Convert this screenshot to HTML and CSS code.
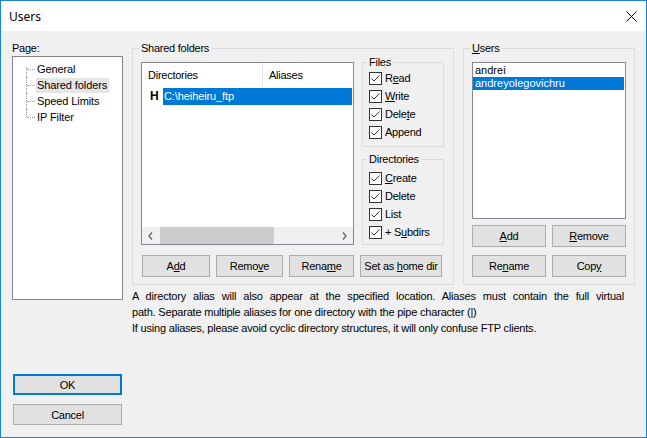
FILE: index.html
```html
<!DOCTYPE html>
<html>
<head>
<meta charset="utf-8">
<title>Users</title>
<link rel="stylesheet" href="styles.css">
</head>
<body>
<div class="window">
  <div class="titlebar">
    <span class="title">Users</span>
    <svg class="close" width="11" height="11" viewBox="0 0 11 11"><path d="M0.5 0.5L10.5 10.5M10.5 0.5L0.5 10.5" stroke="#000" stroke-width="1" fill="none"/></svg>
  </div>
  <div class="content">
    <div class="leftcol">
      <div class="label">Page:</div>
      <div class="tree">
        <ul>
          <li><span>General</span></li>
          <li><span class="sel">Shared folders</span></li>
          <li><span>Speed Limits</span></li>
          <li><span>IP Filter</span></li>
        </ul>
      </div>
      <div class="dlgbtns">
        <button class="btn default">OK</button>
        <button class="btn">Cancel</button>
      </div>
    </div>
    <div class="main">
      <div class="groups">
        <fieldset class="group shared">
          <legend>Shared folders</legend>
          <div class="sharedrow">
            <div class="listview">
              <div class="lv-head">
                <div class="lv-col1">Directories</div>
                <div class="lv-col2">Aliases</div>
              </div>
              <div class="lv-row">
                <span class="home">H</span>
                <span class="lv-sel">C:\heiheiru_ftp</span>
              </div>
              <div class="hscroll">
                <div class="arrow"><svg width="5" height="8" viewBox="0 0 5 8"><path d="M4 0.5L1 4L4 7.5" stroke="#606060" stroke-width="1.2" fill="none"/></svg></div>
                <div class="track"><div class="thumb"></div></div>
                <div class="arrow"><svg width="5" height="8" viewBox="0 0 5 8"><path d="M1 0.5L4 4L1 7.5" stroke="#606060" stroke-width="1.2" fill="none"/></svg></div>
              </div>
            </div>
            <div class="perms">
              <fieldset class="group sub files">
                <legend>Files</legend>
                <div class="cbrow"><svg class="cb" width="13" height="13" viewBox="0 0 13 13"><rect x="0.5" y="0.5" width="12" height="12" fill="#fff" stroke="#333"/><path d="M2.5 6.5L5 9L10.5 3.5" fill="none" stroke="#333"/></svg><span>R<u>e</u>ad</span></div>
                <div class="cbrow"><svg class="cb" width="13" height="13" viewBox="0 0 13 13"><rect x="0.5" y="0.5" width="12" height="12" fill="#fff" stroke="#333"/><path d="M2.5 6.5L5 9L10.5 3.5" fill="none" stroke="#333"/></svg><span><u>W</u>rite</span></div>
                <div class="cbrow"><svg class="cb" width="13" height="13" viewBox="0 0 13 13"><rect x="0.5" y="0.5" width="12" height="12" fill="#fff" stroke="#333"/><path d="M2.5 6.5L5 9L10.5 3.5" fill="none" stroke="#333"/></svg><span>Dele<u>t</u>e</span></div>
                <div class="cbrow"><svg class="cb" width="13" height="13" viewBox="0 0 13 13"><rect x="0.5" y="0.5" width="12" height="12" fill="#fff" stroke="#333"/><path d="M2.5 6.5L5 9L10.5 3.5" fill="none" stroke="#333"/></svg><span>Append</span></div>
              </fieldset>
              <fieldset class="group sub dirs">
                <legend>Directories</legend>
                <div class="cbrow"><svg class="cb" width="13" height="13" viewBox="0 0 13 13"><rect x="0.5" y="0.5" width="12" height="12" fill="#fff" stroke="#333"/><path d="M2.5 6.5L5 9L10.5 3.5" fill="none" stroke="#333"/></svg><span><u>C</u>reate</span></div>
                <div class="cbrow"><svg class="cb" width="13" height="13" viewBox="0 0 13 13"><rect x="0.5" y="0.5" width="12" height="12" fill="#fff" stroke="#333"/><path d="M2.5 6.5L5 9L10.5 3.5" fill="none" stroke="#333"/></svg><span>Delete</span></div>
                <div class="cbrow"><svg class="cb" width="13" height="13" viewBox="0 0 13 13"><rect x="0.5" y="0.5" width="12" height="12" fill="#fff" stroke="#333"/><path d="M2.5 6.5L5 9L10.5 3.5" fill="none" stroke="#333"/></svg><span>List</span></div>
                <div class="cbrow"><svg class="cb" width="13" height="13" viewBox="0 0 13 13"><rect x="0.5" y="0.5" width="12" height="12" fill="#fff" stroke="#333"/><path d="M2.5 6.5L5 9L10.5 3.5" fill="none" stroke="#333"/></svg><span>+ S<u>u</u>bdirs</span></div>
              </fieldset>
            </div>
          </div>
          <div class="sharedbtns">
            <button class="btn b-add">A<u>d</u>d</button>
            <button class="btn b-remove">Remo<u>v</u>e</button>
            <button class="btn b-rename">Rena<u>m</u>e</button>
            <button class="btn b-home">Set as <u>h</u>ome dir</button>
          </div>
        </fieldset>
        <fieldset class="group users">
          <legend><u>U</u>sers</legend>
          <div class="listbox">
            <div class="item">andrei</div>
            <div class="item sel">andreyolegovichru</div>
          </div>
          <div class="ubtns">
            <button class="btn"><u>A</u>dd</button>
            <button class="btn"><u>R</u>emove</button>
            <button class="btn">Re<u>n</u>ame</button>
            <button class="btn">Cop<u>y</u></button>
          </div>
        </fieldset>
      </div>
      <div class="notes">
        <p><span class="wide">A directory alias will also appear at the specified location. Aliases must contain the full virtual</span><br>path. Separate multiple aliases for one directory with the pipe character (|)</p>
        <p>If using aliases, please avoid cyclic directory structures, it will only confuse FTP clients.</p>
      </div>
    </div>
  </div>
</div>
</body>
</html>
```

FILE: styles.css
```css
* {
  box-sizing: border-box;
}

html, body {
  margin: 0;
  padding: 0;
}

body {
  width: 647px;
  height: 438px;
  overflow: hidden;
  font-family: "Liberation Sans", Arial, sans-serif;
  font-size: 11px;
  line-height: 13px;
  letter-spacing: -0.25px;
  color: #000;
  background: #f0f0f0;
}

.window {
  width: 647px;
  height: 438px;
  border: 1px solid #1883d7;
  background: #f0f0f0;
  display: flex;
  flex-direction: column;
}

.titlebar {
  flex: none;
  height: 30px;
  background: #fff;
  display: flex;
  align-items: center;
  justify-content: space-between;
  padding: 0 9px 0 8px;
}

.title {
  font-family: "Noto Sans", "Open Sans", sans-serif;
  font-size: 12px;
  letter-spacing: 0;
}

.close {
  display: block;
}

.content {
  flex: 1;
  display: flex;
  padding: 11px 11px 12px 11px;
}

/* left column */
.leftcol {
  flex: none;
  width: 111px;
  display: flex;
  flex-direction: column;
}

.label {
  height: 13px;
}

.tree {
  margin-top: 1px;
  height: 244px;
  background: #fff;
  border: 1px solid #828790;
  padding-top: 4px;
}

.tree ul {
  list-style: none;
  margin: 0;
  padding: 0 0 0 23px;
}

.tree li {
  position: relative;
  height: 16px;
  line-height: 16px;
  letter-spacing: -0.1px;
}

.tree li span {
  display: inline-block;
  padding: 0 2px 0 1px;
  line-height: 15px;
}

.tree li span.sel {
  background: #e5e5e5;
}

.tree li::before {
  content: "";
  position: absolute;
  left: -10px;
  top: 0;
  height: 16px;
  border-left: 1px dotted #a0a0a0;
}

.tree li:first-child::before {
  top: 6px;
  height: 10px;
}

.tree li:last-child::before {
  height: 8px;
}

.tree li::after {
  content: "";
  position: absolute;
  left: -9px;
  top: 8px;
  width: 8px;
  border-top: 1px dotted #a0a0a0;
}

.dlgbtns {
  margin-top: auto;
  display: flex;
  flex-direction: column;
  gap: 9px;
  padding-left: 1px;
}

.btn {
  font-family: inherit;
  font-size: 11px;
  letter-spacing: -0.25px;
  color: #000;
  height: 22px;
  padding: 0;
  background: #e1e1e1;
  border: 1px solid #adadad;
  border-radius: 0;
}

.dlgbtns .btn {
  width: 109px;
  height: 21px;
}

.btn.default {
  border: 2px solid #0078d7;
}

/* main area */
.main {
  flex: 1;
  margin-left: 9px;
  display: flex;
  flex-direction: column;
}

.groups {
  display: flex;
  gap: 9px;
}

fieldset.group {
  margin: 0;
  min-width: 0;
  border: 1px solid #dcdcdc;
}

fieldset.group legend {
  padding: 0 2px;
  margin-left: -2px;
  line-height: 13px;
}

.shared {
  width: 322px;
  padding: 1px 9px 7px 8px;
}

.sharedrow {
  display: flex;
  gap: 8px;
  align-items: flex-start;
}

.listview {
  width: 213px;
  height: 183px;
  margin-top: 6px;
  border: 1px solid #828790;
  background: #fff;
  display: flex;
  flex-direction: column;
}

.lv-head {
  height: 24px;
  display: flex;
}

.lv-col1 {
  width: 121px;
  padding-left: 6px;
  border-right: 1px solid #e5e5e5;
  display: flex;
  align-items: center;
}

.lv-col2 {
  padding-left: 6px;
  display: flex;
  align-items: center;
}

.lv-row {
  margin-top: 1px;
  height: 17px;
  display: flex;
  align-items: center;
  padding-left: 8px;
}

.home {
  width: 13px;
  font-weight: bold;
  font-size: 12px;
  letter-spacing: 0;
}

.lv-sel {
  flex: 1;
  margin-right: 1px;
  height: 17px;
  line-height: 17px;
  background: #0078d7;
  color: #fff;
  padding-left: 1px;
  letter-spacing: -0.1px;
}

.hscroll {
  margin-top: auto;
  height: 17px;
  background: #f0f0f0;
  display: flex;
}

.hscroll .arrow {
  width: 17px;
  display: flex;
  align-items: center;
  justify-content: center;
}

.hscroll .track {
  flex: 1;
  padding-left: 1px;
}

.hscroll .thumb {
  width: 114px;
  height: 17px;
  background: #cdcdcd;
}

.perms {
  width: 82px;
  display: flex;
  flex-direction: column;
}

.sub {
  padding: 0 0 5px 6px;
}

.sub.dirs {
  margin-top: 6px;
  padding-top: 3px;
  padding-bottom: 3px;
}

.cbrow {
  height: 18px;
  display: flex;
  align-items: center;
  gap: 3px;
}

.cb {
  display: block;
  flex: none;
}

.sharedbtns {
  margin-top: 10px;
  display: flex;
  gap: 6px;
  padding-left: 1px;
}

.b-add { width: 68px; }
.b-remove { width: 67px; }
.b-rename { width: 65px; }
.b-home { width: 82px; }

.users {
  width: 172px;
  padding: 7px 8px 7px 8px;
}

.listbox {
  width: 154px;
  height: 157px;
  border: 1px solid #828790;
  background: #fff;
  padding-top: 1px;
  letter-spacing: 0;
}

.listbox .item {
  height: 13px;
  padding-left: 2px;
  margin-right: 1px;
}

.listbox .item.sel {
  background: #0078d7;
  color: #fff;
}

.ubtns {
  margin-top: 6px;
  display: grid;
  grid-template-columns: 74px 74px;
  column-gap: 6px;
  row-gap: 8px;
}

.notes {
  margin-top: 3px;
  white-space: nowrap;
  font-size: 11px;
  line-height: 16px;
  letter-spacing: -0.2px;
}

.notes p {
  margin: 0;
}

.notes .wide {
  word-spacing: 4.2px;
}
```
